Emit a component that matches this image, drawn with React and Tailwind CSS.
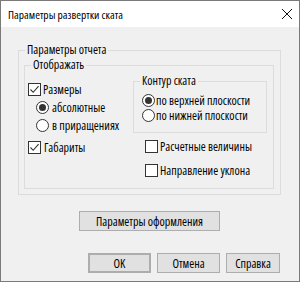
import React from "react";

function Check({ checked }) {
  return (
    <span className="w-[13px] h-[13px] border border-[#333333] bg-white flex items-center justify-center shrink-0">
      {checked && (
        <svg width="11" height="11" viewBox="0 0 11 11">
          <path d="M1.5 5.5 L4.2 8.3 L9.6 2.2" fill="none" stroke="#333333" strokeWidth="1.1" />
        </svg>
      )}
    </span>
  );
}

function Radio({ checked }) {
  return (
    <span className="w-[13px] h-[13px] rounded-full border border-[#333333] bg-white flex items-center justify-center shrink-0">
      {checked && <span className="w-[7px] h-[7px] rounded-full bg-[#333333]" />}
    </span>
  );
}

function Btn({ children, className = "" }) {
  return (
    <div className={"h-[20px] bg-[#e1e1e1] border border-[#adadad] flex items-center justify-center whitespace-nowrap " + className}>
      {children}
    </div>
  );
}

export default function App() {
  return (
    <div className="w-[300px] h-[282px] border border-[#7a7a7a] bg-[#f0f0f0] flex flex-col font-['Open_Sans',Arial,sans-serif] [font-stretch:87.5%] text-[12px] text-black leading-[15px] whitespace-nowrap">
      <div className="h-[26px] bg-white flex items-center pl-[7px] pr-[6px] shrink-0 text-[11.5px]">
        <span>Параметры развертки ската</span>
        <svg className="ml-auto" width="12" height="12" viewBox="0 0 12 12">
          <path d="M1 1 L11 11 M11 1 L1 11" stroke="#111" strokeWidth="1" />
        </svg>
      </div>
      <div className="flex-1 flex flex-col pt-[16px]">
        <fieldset className="ml-[17px] w-[263px] border border-[#dcdcdc] pb-[5px]">
          <legend className="ml-[6px] px-[2px] leading-[14px]">Параметры отчета</legend>
          <fieldset className="mt-[1px] ml-[5px] w-[250px] h-[131px] border border-[#dcdcdc]">
            <legend className="ml-[6px] px-[2px] leading-[14px]">Отображать</legend>
            <div className="flex">
              <div className="w-[108px] pl-[3px] flex flex-col">
                <label className="h-[18px] mt-[8px] flex items-center gap-[2px]">
                  <Check checked />
                  <span>Размеры</span>
                </label>
                <label className="h-[18px] pl-[8px] flex items-center gap-[3px]">
                  <Radio checked />
                  <span>абсолютные</span>
                </label>
                <label className="h-[18px] pl-[8px] flex items-center gap-[3px]">
                  <Radio />
                  <span>в приращениях</span>
                </label>
                <label className="h-[18px] mt-[4px] flex items-center gap-[3px]">
                  <Check checked />
                  <span>Габариты</span>
                </label>
              </div>
              <div className="flex flex-col">
                <fieldset className="mt-[2px] w-[134px] border border-[#dcdcdc] pb-[9px]">
                  <legend className="ml-[6px] px-[2px] leading-[14px]">Контур ската</legend>
                  <label className="h-[15px] mt-[5px] pl-[8px] flex items-center gap-[1px]">
                    <Radio checked />
                    <span className="leading-[13px]">по верхней плоскости</span>
                  </label>
                  <label className="h-[15px] pl-[8px] flex items-center gap-[1px]">
                    <Radio />
                    <span className="leading-[13px]">по нижней плоскости</span>
                  </label>
                </fieldset>
                <label className="h-[18px] mt-[4px] pl-[12px] flex items-center gap-[2px]">
                  <Check />
                  <span>Расчетные величины</span>
                </label>
                <label className="h-[18px] mt-[6px] pl-[12px] flex items-center gap-[2px]">
                  <Check />
                  <span>Направление уклона</span>
                </label>
              </div>
            </div>
          </fieldset>
        </fieldset>
        <Btn className="mt-[16px] ml-[78px] w-[141px] h-[19px]">Параметры оформления</Btn>
        <div className="mt-[22px] flex justify-end gap-[6px] pr-[19px]">
          <Btn className="w-[63px] border-2 border-[#0078d7]">OK</Btn>
          <Btn className="w-[63px]">Отмена</Btn>
          <Btn className="w-[54px]">Справка</Btn>
        </div>
      </div>
    </div>
  );
}
